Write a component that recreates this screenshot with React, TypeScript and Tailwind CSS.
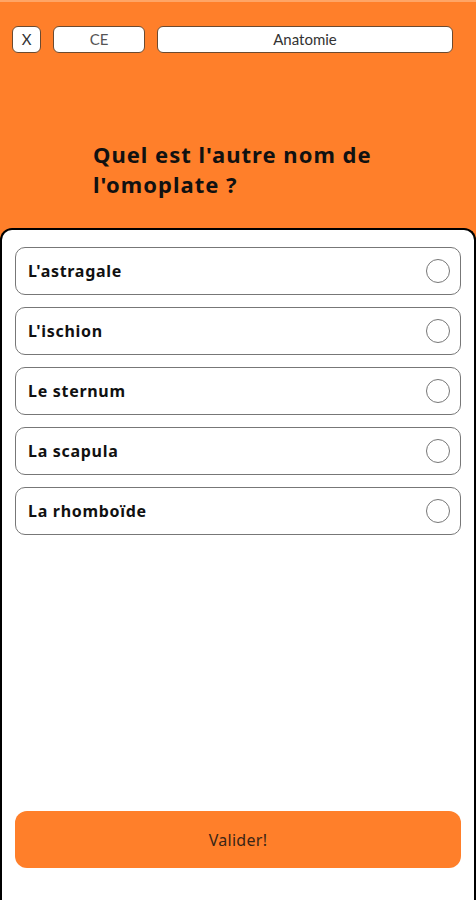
import React from "react";

const options = ["L'astragale", "L'ischion", "Le sternum", "La scapula", "La rhomboïde"];

export default function App() {
  return (
    <div className="w-[476px] h-[900px] bg-[#ff7f2a] flex flex-col overflow-hidden" style={{ fontFamily: "'Noto Sans', sans-serif" }}>
      <div className="h-[2px] bg-[#ffa566]" />
      <div className="flex items-center gap-[12px] pl-[12px] pr-[23px] pt-[24px]">
        <button className="w-[29px] h-[27px] bg-white border border-[#6b4a30] rounded-[6px] text-[15px] text-[#333] flex items-center justify-center" style={{ fontFamily: "Lato, sans-serif" }}>X</button>
        <button className="w-[92px] h-[27px] bg-white border border-[#6b4a30] rounded-[6px] text-[15px] text-[#555] flex items-center justify-center" style={{ fontFamily: "Lato, sans-serif" }}>CE</button>
        <button className="flex-1 h-[27px] bg-white border border-[#6b4a30] rounded-[6px] text-[15px] text-[#333] flex items-center justify-center" style={{ fontFamily: "Lato, sans-serif" }}>Anatomie</button>
      </div>
      <div className="pl-[93px] pr-[40px] pt-[86px] h-[175px]">
        <h1 className="text-[22px] leading-[30px] font-bold tracking-[1px] text-[#111]">Quel est l'autre nom de l'omoplate ?</h1>
      </div>
      <div className="flex-1 bg-white border-2 border-b-0 border-black rounded-t-[12px] px-[13px] pt-[17px] pb-[32px] flex flex-col">
        <div className="flex flex-col gap-[12px]">
          {options.map((o) => (
            <div key={o} className="h-[48px] border-[1.5px] border-[#777] rounded-[10px] flex items-center justify-between pl-[12px] pr-[10px]">
              <span className="text-[16px] font-bold tracking-[0.7px] text-[#111]">{o}</span>
              <span className="w-[24px] h-[24px] rounded-full border-[1.5px] border-[#777]" />
            </div>
          ))}
        </div>
        <div className="flex-1" />
        <button className="h-[57px] w-full bg-[#ff7f2a] rounded-[12px] text-[16px] tracking-[0.3px] text-[#3a2516]">Valider!</button>
      </div>
    </div>
  );
}
